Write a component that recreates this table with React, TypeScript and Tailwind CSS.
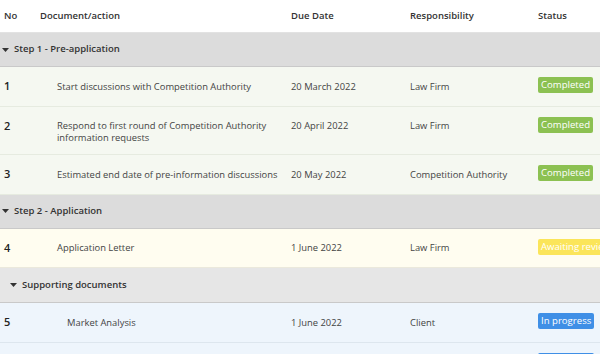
import React from 'react';

type Status = 'Completed' | 'Awaiting review' | 'In progress';

interface Task {
  no: number;
  title: React.ReactNode;
  due: string;
  owner: string;
  status: Status;
  tone: 'green' | 'yellow' | 'blue';
  indent?: boolean;
}

const badgeClass: Record<Status, string> = {
  Completed: 'bg-[#8cc152]',
  'Awaiting review': 'bg-[#fbe55a]',
  'In progress': 'bg-[#3f8fe6]',
};

const rowClass = {
  green: 'bg-[#f5f8f1] border-[#e6ebe0]',
  yellow: 'bg-[#fffdf0] border-[#ebe9dc]',
  blue: 'bg-[#eef5fc] border-[#dde6ee]',
};

const Caret = () => (
  <svg width="7" height="4" viewBox="0 0 7 4" className="shrink-0">
    <path d="M0 0h7L3.5 4z" fill="#333" />
  </svg>
);

const GroupRow = ({ label, sub }: { label: string; sub?: boolean }) => (
  <div
    className={`flex items-center gap-[5px] border-b border-[#c9c9c9] ${
      sub ? 'h-[35px] bg-[#e6e6e6] pl-[10px]' : 'h-[34px] bg-[#dcdcdc] pl-[2px]'
    }`}
  >
    <Caret />
    <span className="text-[9.5px] font-semibold text-[#333]">{label}</span>
  </div>
);

const TaskRow = ({ task }: { task: Task }) => (
  <div className={`flex items-start min-h-[39.5px] pt-[12px] pb-[11px] border-b ${rowClass[task.tone]}`}>
    <div className="w-[40px] pl-[4px] text-[11px] leading-[13px] font-semibold text-[#222]">{task.no}</div>
    <div className={`w-[251px] text-[9.4px] leading-[11.5px] pt-[1.5px] text-[#444] ${task.indent ? 'pl-[27px]' : 'pl-[17px]'}`}>
      {task.title}
    </div>
    <div className="w-[119px] text-[9.4px] leading-[11.5px] pt-[1.5px] text-[#444]">{task.due}</div>
    <div className="w-[128px] text-[9.4px] leading-[11.5px] pt-[1.5px] text-[#444]">{task.owner}</div>
    <div className="flex flex-1 -mt-[2px]">
      <span
        className={`whitespace-nowrap rounded-[2px] px-[3px] text-[9.6px] leading-[16px] text-white ${badgeClass[task.status]}`}
      >
        {task.status}
      </span>
    </div>
  </div>
);

export default function App() {
  return (
    <div className="w-[600px] h-[354px] overflow-hidden bg-white font-['Open_Sans',sans-serif]">
      <div className="w-[680px]">
        <div className="flex items-center h-[33px] border-b border-[#e2e2e2] text-[9.5px] font-semibold text-[#333]">
          <div className="w-[40px] pl-[4px]">No</div>
          <div className="w-[251px]">Document/action</div>
          <div className="w-[119px]">Due Date</div>
          <div className="w-[128px]">Responsibility</div>
          <div className="flex-1">Status</div>
        </div>

        <GroupRow label="Step 1 - Pre-application" />
        <TaskRow
          task={{ no: 1, title: 'Start discussions with Competition Authority', due: '20 March 2022', owner: 'Law Firm', status: 'Completed', tone: 'green' }}
        />
        <TaskRow
          task={{
            no: 2,
            title: (
              <>
                Respond to first round of Competition Authority
                <br />
                information requests
              </>
            ),
            due: '20 April 2022',
            owner: 'Law Firm',
            status: 'Completed',
            tone: 'green',
          }}
        />
        <TaskRow
          task={{ no: 3, title: 'Estimated end date of pre-information discussions', due: '20 May 2022', owner: 'Competition Authority', status: 'Completed', tone: 'green' }}
        />

        <GroupRow label="Step 2 - Application" />
        <TaskRow
          task={{ no: 4, title: 'Application Letter', due: '1 June 2022', owner: 'Law Firm', status: 'Awaiting review', tone: 'yellow' }}
        />
        <GroupRow label="Supporting documents" sub />
        <TaskRow
          task={{ no: 5, title: 'Market Analysis', due: '1 June 2022', owner: 'Client', status: 'In progress', tone: 'blue', indent: true }}
        />
        <TaskRow
          task={{ no: 6, title: 'Financial Statements', due: '1 June 2022', owner: 'Client', status: 'In progress', tone: 'blue', indent: true }}
        />
      </div>
    </div>
  );
}
